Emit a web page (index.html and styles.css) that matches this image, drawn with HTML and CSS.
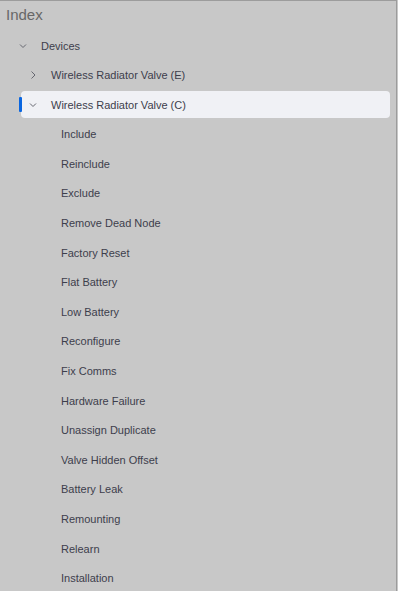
FILE: index.html
```html
<!DOCTYPE html>
<html>
<head>
<meta charset="utf-8">
<link rel="stylesheet" href="styles.css">
</head>
<body>
<div class="panel">
  <div class="header">Index</div>
  <div class="tree">
    <div class="row lvl0">
      <span class="chev"><svg width="16" height="16" viewBox="0 0 16 16"><polyline points="5,6.5 8,9.5 11,6.5"/></svg></span>
      <span class="label">Devices</span>
    </div>
    <div class="row lvl1">
      <span class="chev"><svg width="16" height="16" viewBox="0 0 16 16"><polyline points="6.5,4.5 10,8 6.5,11.5"/></svg></span>
      <span class="label">Wireless Radiator Valve (E)</span>
    </div>
    <div class="row lvl1 selected">
      <span class="marker"></span>
      <span class="chev"><svg width="16" height="16" viewBox="0 0 16 16"><polyline points="5,6.5 8,9.5 11,6.5"/></svg></span>
      <span class="label">Wireless Radiator Valve (C)</span>
    </div>
    <div class="row lvl2"><span class="chev"></span><span class="label">Include</span></div>
    <div class="row lvl2"><span class="chev"></span><span class="label">Reinclude</span></div>
    <div class="row lvl2"><span class="chev"></span><span class="label">Exclude</span></div>
    <div class="row lvl2"><span class="chev"></span><span class="label">Remove Dead Node</span></div>
    <div class="row lvl2"><span class="chev"></span><span class="label">Factory Reset</span></div>
    <div class="row lvl2"><span class="chev"></span><span class="label">Flat Battery</span></div>
    <div class="row lvl2"><span class="chev"></span><span class="label">Low Battery</span></div>
    <div class="row lvl2"><span class="chev"></span><span class="label">Reconfigure</span></div>
    <div class="row lvl2"><span class="chev"></span><span class="label">Fix Comms</span></div>
    <div class="row lvl2"><span class="chev"></span><span class="label">Hardware Failure</span></div>
    <div class="row lvl2"><span class="chev"></span><span class="label">Unassign Duplicate</span></div>
    <div class="row lvl2"><span class="chev"></span><span class="label">Valve Hidden Offset</span></div>
    <div class="row lvl2"><span class="chev"></span><span class="label">Battery Leak</span></div>
    <div class="row lvl2"><span class="chev"></span><span class="label">Remounting</span></div>
    <div class="row lvl2"><span class="chev"></span><span class="label">Relearn</span></div>
    <div class="row lvl2"><span class="chev"></span><span class="label">Installation</span></div>
  </div>
</div>
</body>
</html>
```
FILE: styles.css
```css
html, body {
  margin: 0;
  padding: 0;
  background: #c8c8c8;
}
body {
  width: 398px;
  height: 591px;
  overflow: hidden;
  font-family: "Liberation Sans", Arial, sans-serif;
}
.panel {
  box-sizing: border-box;
  width: 397px;
  height: 591px;
  border-top: 1px solid #9c9c9c;
  border-right: 1px solid #9c9c9c;
  background: #c8c8c8;
  overflow: hidden;
}
.header {
  padding: 4px 6px 0;
  height: 20px;
  line-height: 20px;
  font-size: 15px;
  color: #676767;
}
.tree {
  display: flex;
  flex-direction: column;
  gap: 2.6px;
  padding-top: 7px;
}
.row {
  position: relative;
  display: flex;
  align-items: center;
  flex: none;
  height: 27px;
  margin-right: 6px;
  padding-left: 4px;
  border-radius: 4px;
  font-size: 11px;
  color: #3d3e4c;
}
.lvl0 { margin-left: 11px; }
.lvl1 { margin-left: 21px; }
.lvl2 { margin-left: 31px; }
.chev {
  display: flex;
  width: 16px;
  height: 16px;
  flex: none;
}
.chev svg polyline {
  fill: none;
  stroke: #666770;
  stroke-width: 1;
}
.label {
  margin-left: 10px;
  white-space: nowrap;
}
.selected {
  background: #f0f1f5;
}
.marker {
  position: absolute;
  left: -2px;
  top: 6px;
  width: 3px;
  height: 15px;
  border-radius: 1px;
  background: #0a66e0;
}
```
